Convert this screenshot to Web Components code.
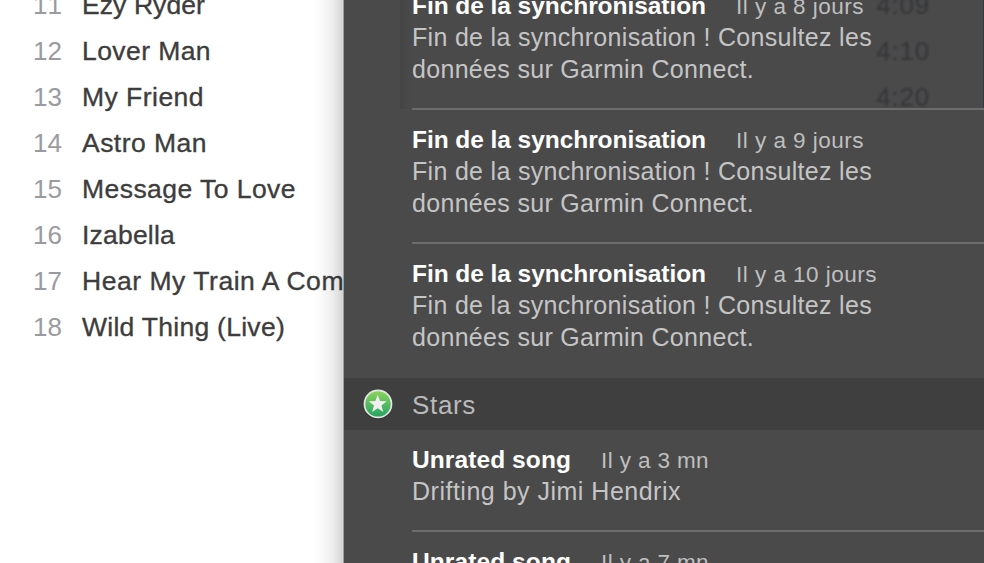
<!DOCTYPE html>
<html lang="fr">
<head>
<meta charset="utf-8">
<title>Notifications</title>
<style>
html,body{margin:0;width:984px;height:563px;overflow:hidden;background:#fff;font-family:"Liberation Sans",Arial,sans-serif}
</style>
</head>
<body>
<desktop-view>
  <track-list slot="back">
    <track-row n="11"><fit-text w="123">Ezy Ryder</fit-text></track-row>
    <track-row n="12"><fit-text w="129">Lover Man</fit-text></track-row>
    <track-row n="13"><fit-text w="122">My Friend</fit-text></track-row>
    <track-row n="14"><fit-text w="125">Astro Man</fit-text></track-row>
    <track-row n="15"><fit-text w="214">Message To Love</fit-text></track-row>
    <track-row n="16"><fit-text w="93">Izabella</fit-text></track-row>
    <track-row n="17"><fit-text w="262">Hear My Train A Com</fit-text></track-row>
    <track-row n="18"><fit-text w="203">Wild Thing (Live)</fit-text></track-row>
  </track-list>
  <notification-panel slot="front">
    <ghost-times slot="ghost"></ghost-times>
    <notification-item>
      <fit-text slot="title" w="294">Fin de la synchronisation</fit-text>
      <fit-text slot="date" w="128">Il y a 8 jours</fit-text>
      <fit-text w="460">Fin de la synchronisation ! Consultez les</fit-text>
      <fit-text w="342">données sur Garmin Connect.</fit-text>
    </notification-item>
    <notification-item>
      <fit-text slot="title" w="294">Fin de la synchronisation</fit-text>
      <fit-text slot="date" w="128">Il y a 9 jours</fit-text>
      <fit-text w="460">Fin de la synchronisation ! Consultez les</fit-text>
      <fit-text w="342">données sur Garmin Connect.</fit-text>
    </notification-item>
    <notification-item last>
      <fit-text slot="title" w="294">Fin de la synchronisation</fit-text>
      <fit-text slot="date" w="141">Il y a 10 jours</fit-text>
      <fit-text w="460">Fin de la synchronisation ! Consultez les</fit-text>
      <fit-text w="342">données sur Garmin Connect.</fit-text>
    </notification-item>
    <group-header><fit-text w="64">Stars</fit-text></group-header>
    <notification-item>
      <fit-text slot="title" w="159">Unrated song</fit-text>
      <fit-text slot="date" w="108">Il y a 3 mn</fit-text>
      <fit-text w="269">Drifting by Jimi Hendrix</fit-text>
    </notification-item>
    <notification-item last>
      <fit-text slot="title" w="159">Unrated song</fit-text>
      <fit-text slot="date" w="108">Il y a 7 mn</fit-text>
    </notification-item>
  </notification-panel>
</desktop-view>
<script>
const define = (name, html, ready) => customElements.define(name, class extends HTMLElement {
  constructor() {
    super();
    this.attachShadow({ mode: 'open' }).innerHTML = html;
  }
  connectedCallback() { if (ready) ready(this); }
});

define('desktop-view', `<style>
:host{display:block;position:relative;width:984px;height:563px;overflow:hidden}
.front{position:absolute;left:344px;top:0;width:640px;height:563px}
</style><slot name="back"></slot><div class="front"><slot name="front"></slot></div>`);

define('track-list', `<style>
:host{display:flex;flex-direction:column;margin-top:-18px;width:344px;overflow:hidden}
</style><slot></slot>`);

define('track-row', `<style>
:host{display:flex;height:46px;line-height:46px;font-size:26.5px;color:#3d3d3d;white-space:nowrap}
.n{width:62px;padding-right:20px;box-sizing:content-box;flex:none;text-align:right;font-size:26px;color:#9a9aa1;font-kerning:none}
.name{-webkit-text-stroke:.35px #3d3d3d}
</style><span class="n"></span><span class="name"><slot></slot></span>`,
  el => { el.shadowRoot.querySelector('.n').textContent = el.getAttribute('n'); });

define('notification-panel', `<style>
:host{display:block;position:relative;width:640px;height:563px;background:#4a4a4a}
:host::before{content:"";position:absolute;left:-32px;top:0;width:32px;height:563px;
background:linear-gradient(90deg,rgba(0,0,0,0),rgba(0,0,0,.02) 30%,rgba(0,0,0,.07) 65%,rgba(0,0,0,.17) 97%,rgba(0,0,0,.38) 97%)}
.view{height:563px;overflow:hidden;position:relative}
.list{display:flex;flex-direction:column;margin-top:-24px;position:relative}
</style><div class="view"><slot name="ghost"></slot><div class="list"><slot></slot></div></div>`);

define('notification-item', `<style>
:host{display:flex;flex-direction:column;flex:none;margin-left:68px;padding:14px 0 23px;border-bottom:2px solid #6c6c6c;line-height:32px;font-size:25px;color:#c5c5c5;white-space:nowrap}
:host([last]){border:0;padding-bottom:25px}
.top{display:flex;align-items:baseline;gap:30px;height:31px}
.t{font-weight:bold;color:#fff;font-size:24.5px}
.d{font-size:22.5px;color:#bfbfbf}
.t,.d{line-height:32px}
.b{display:flex;flex-direction:column;align-items:flex-start}
</style><div class="top"><span class="t"><slot name="title"></slot></span><span class="d"><slot name="date"></slot></span></div><div class="b"><slot></slot></div>`);

define('group-header', `<style>
:host{display:flex;flex:none;align-items:center;height:52px;background:#3f3f3f;color:#bababa;font-size:26px;line-height:52px}
svg{flex:none;width:32px;height:32px;margin:0 18px 0 18px}
.l{padding-top:2px}
</style><svg viewBox="0 0 32 32"><defs><linearGradient id="g" x2="0" y2="1"><stop offset="0" stop-color="#8bd35c"/><stop offset="1" stop-color="#25a462"/></linearGradient></defs>
<circle cx="16" cy="16.8" r="14.6" fill="#2c2c2c" opacity=".6"/><circle cx="16" cy="15.9" r="14.4" fill="#e6e6e6"/><circle cx="16" cy="15.9" r="12.7" fill="url(#g)"/>
<path fill="#efefef" d="M15.7 6.8 18 13.1 24.7 13.3 19.4 17.4 21.3 24.1 15.7 20.2 10.1 24.1 12 17.4 6.7 13.3 13.4 13.1Z"/></svg><span class="l"><slot></slot></span>`);

define('ghost-times', `<style>
:host{position:absolute;left:56px;top:0;width:584px;height:109px;overflow:hidden;box-sizing:border-box;display:flex;flex-direction:column;align-items:flex-end;
background:linear-gradient(90deg,#444 0,#474747 4px,#4a4a4a 14px);border-right:1px solid #353a3f}
span{height:46px;line-height:46px;margin-right:53px;font-size:26px;color:#343539;filter:blur(1.3px);letter-spacing:.8px;flex:none}
span:first-of-type{margin-top:-18px}
</style><span>4:09</span><span>4:10</span><span>4:20</span>`);

/* Spreads a single line of text over the width given in pixels. */
define('fit-text', `<style>:host{display:inline-block;white-space:nowrap;flex:none}</style><slot></slot>`);
document.querySelectorAll('fit-text').forEach(el => {
  const own = el.getBoundingClientRect().width;
  el.style.letterSpacing = (el.getAttribute('w') - own) / el.textContent.length + 'px';
});
</script>
</body>
</html>
